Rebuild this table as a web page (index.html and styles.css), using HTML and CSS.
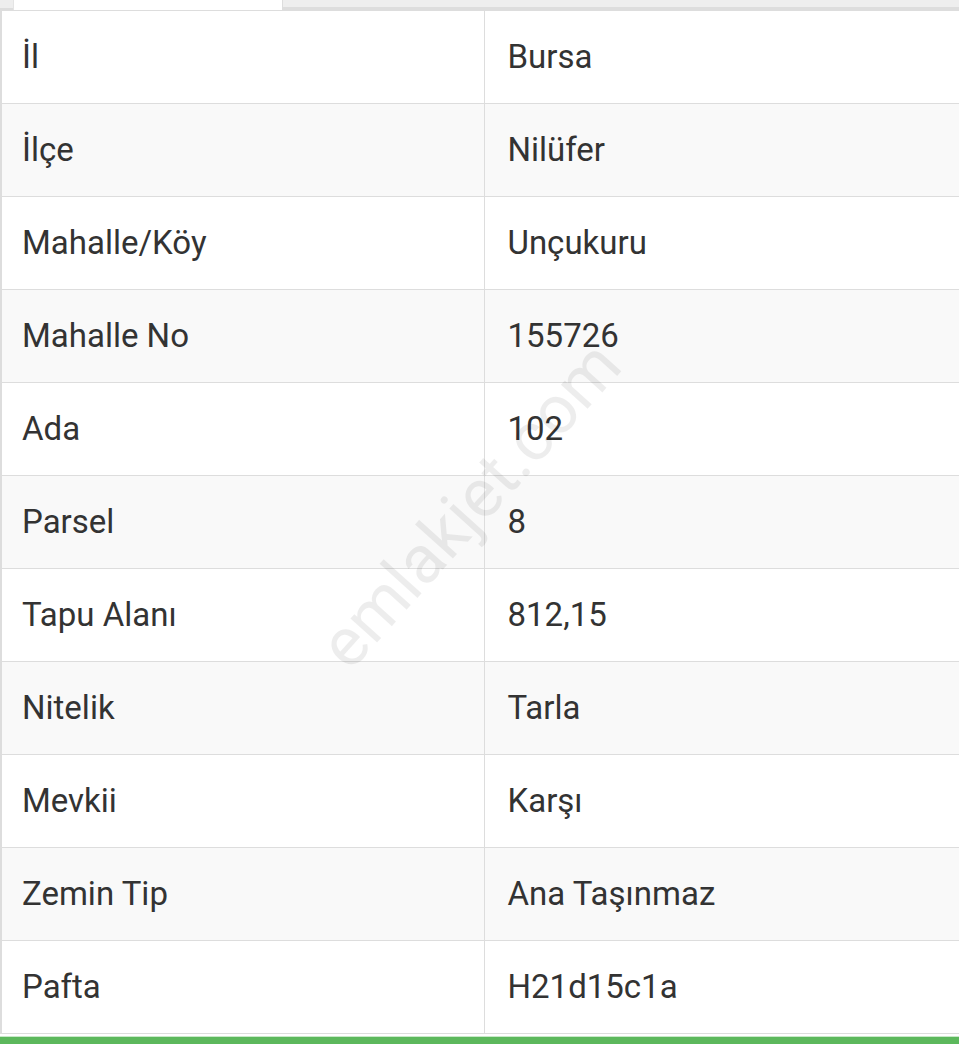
FILE: index.html
```html
<!DOCTYPE html>
<html lang="tr">
<head>
<meta charset="utf-8">
<title>Tapu Bilgileri</title>
<link rel="stylesheet" href="styles.css">
</head>
<body>
<div class="page">
  <div class="tabs">
    <div class="tab-gap"></div>
    <div class="tab active"></div>
    <div class="tab-rest"></div>
  </div>
  <table class="info">
    <tbody>
      <tr><td>İl</td><td>Bursa</td></tr>
      <tr><td>İlçe</td><td>Nilüfer</td></tr>
      <tr><td>Mahalle/Köy</td><td>Unçukuru</td></tr>
      <tr><td>Mahalle No</td><td>155726</td></tr>
      <tr><td>Ada</td><td>102</td></tr>
      <tr><td>Parsel</td><td>8</td></tr>
      <tr><td>Tapu Alanı</td><td>812,15</td></tr>
      <tr><td>Nitelik</td><td>Tarla</td></tr>
      <tr><td>Mevkii</td><td>Karşı</td></tr>
      <tr><td>Zemin Tip</td><td>Ana Taşınmaz</td></tr>
      <tr><td>Pafta</td><td>H21d15c1a</td></tr>
    </tbody>
  </table>
  <div class="footer-bar"></div>
  <div class="watermark">emlakjet.com</div>
</div>
</body>
</html>
```

FILE: styles.css
```css
html, body {
  margin: 0;
  padding: 0;
  background: #ffffff;
  overflow: hidden;
}

.page {
  position: relative;
  width: 959px;
  height: 1044px;
  overflow: hidden;
  font-family: Roboto, "Noto Sans", sans-serif;
  color: #333333;
}

.tabs {
  display: flex;
  height: 10px;
}

.tab-gap {
  width: 13px;
  background: #eeeeee;
  border-bottom: 2px solid #dddddd;
  box-sizing: border-box;
}

.tab.active {
  width: 270px;
  background: #ffffff;
  border-left: 1px solid #e4e4e4;
  border-right: 1px solid #dddddd;
  box-sizing: border-box;
}

.tab-rest {
  flex: 1;
  background: #eeeeee;
  border-bottom: 3px solid #dddddd;
  box-sizing: border-box;
}

.info {
  width: 961px;
  border-collapse: collapse;
  table-layout: fixed;
  border-top: 1px solid #dddddd;
}

.info td {
  height: 93px;
  padding: 0 0 0 23px;
  font-size: 33px;
  line-height: 38px;
  vertical-align: middle;
  border: 1px solid #dddddd;
  border-top: none;
  box-sizing: border-box;
}

.info td:first-child {
  width: 483px;
  border-left: 2px solid #dddddd;
  padding-left: 20px;
}

.info tr:nth-child(even) td {
  background: #f9f9f9;
}

.footer-bar {
  height: 9px;
  margin-top: 2px;
  background: #5cb85c;
  border-top: 1px solid #c9e8c9;
}

.watermark {
  position: absolute;
  left: 470px;
  top: 505px;
  transform: translate(-50%, -50%) rotate(-48deg);
  font-size: 68px;
  color: rgba(0, 0, 0, 0.07);
  white-space: nowrap;
  pointer-events: none;
}
```
